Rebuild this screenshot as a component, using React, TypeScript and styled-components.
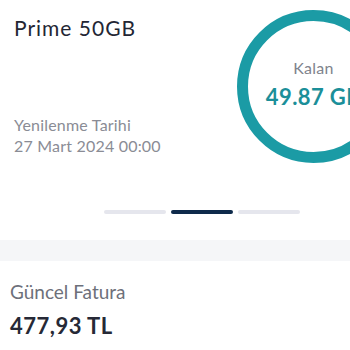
import React from "react";
import styled, { createGlobalStyle } from "styled-components";

const Global = createGlobalStyle`
  html, body { margin: 0; padding: 0; background: #ffffff; }
  body { font-family: "Lato", "Noto Sans", sans-serif; width: 350px; height: 350px; overflow: hidden; }
`;

const Page = styled.div`
  width: 350px;
  height: 350px;
  overflow: hidden;
  display: flex;
  flex-direction: column;
  background: #fff;
`;

const PackageCard = styled.section`
  display: flex;
  flex-direction: row;
  height: 200px;
  overflow: hidden;
`;

const InfoColumn = styled.div`
  flex: 1;
  display: flex;
  flex-direction: column;
  padding: 14px 0 0 14px;
`;

const Title = styled.h1`
  margin: 0;
  font-size: 21px;
  font-weight: 400;
  letter-spacing: 1px;
  color: #232634;
  line-height: 28px;
`;

const Renewal = styled.div`
  margin-top: 72px;
  font-size: 16px;
  line-height: 21px;
  letter-spacing: 0.2px;
  color: #8a8c95;
`;

const Ring = styled.div`
  flex: none;
  box-sizing: border-box;
  width: 153px;
  height: 153px;
  margin: 10px -40px 0 0;
  border: 11px solid #1b9ba5;
  border-radius: 50%;
  display: flex;
  flex-direction: column;
  align-items: center;
  padding-top: 37px;
`;

const RingLabel = styled.div`
  font-size: 16px;
  line-height: 20px;
  letter-spacing: 0.3px;
  color: #80838d;
`;

const RingValue = styled.div`
  margin-top: 6px;
  font-size: 22px;
  font-weight: 700;
  letter-spacing: 0.4px;
  color: #1b8f99;
  white-space: nowrap;
  line-height: 26px;
`;

const Pager = styled.div`
  display: flex;
  gap: 5px;
  padding: 10px 0 0 104px;
  height: 40px;
  box-sizing: border-box;
`;

const Dot = styled.div<{ $active?: boolean }>`
  width: 62px;
  height: 4px;
  border-radius: 2px;
  background: ${(p) => (p.$active ? "#0e2a4b" : "#e5e6ed")};
`;

const Divider = styled.div`
  height: 21px;
  background: #f5f6f8;
`;

const Bill = styled.section`
  padding: 19px 0 0 10px;
`;

const BillLabel = styled.div`
  font-size: 19px;
  line-height: 24px;
  color: #6d707a;
`;

const BillValue = styled.div`
  margin-top: 8px;
  font-size: 22px;
  font-weight: 700;
  letter-spacing: 0.5px;
  color: #262936;
  line-height: 28px;
`;

export default function App() {
  return (
    <Page>
      <Global />
      <PackageCard>
        <InfoColumn>
          <Title>Prime 50GB</Title>
          <Renewal>
            Yenilenme Tarihi
            <br />
            27 Mart 2024 00:00
          </Renewal>
        </InfoColumn>
        <Ring>
          <RingLabel>Kalan</RingLabel>
          <RingValue>49.87 GB</RingValue>
        </Ring>
      </PackageCard>
      <Pager>
        <Dot />
        <Dot $active />
        <Dot />
      </Pager>
      <Divider />
      <Bill>
        <BillLabel>Güncel Fatura</BillLabel>
        <BillValue>477,93 TL</BillValue>
      </Bill>
    </Page>
  );
}
